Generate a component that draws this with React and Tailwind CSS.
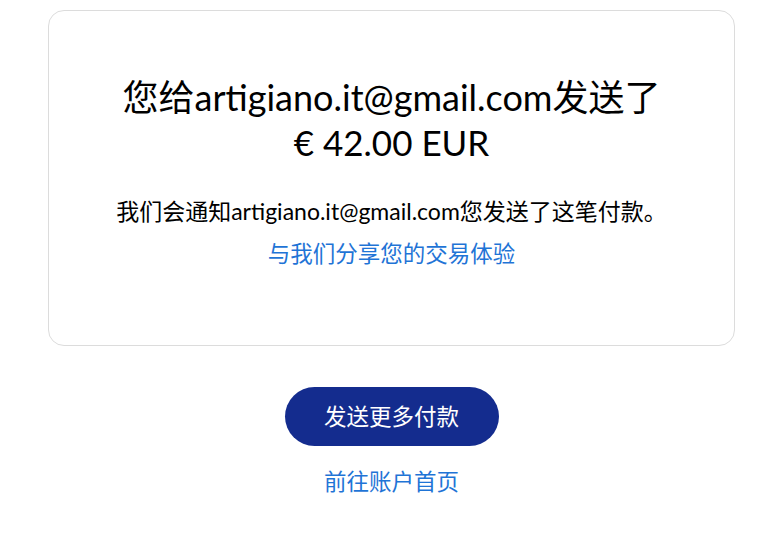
const font = { fontFamily: '"Lato", "Noto Sans CJK SC", sans-serif' };

export default function App() {
  return (
    <div className="min-h-screen bg-white pt-[10px] text-[#000]" style={font}>
      <div className="ml-[48px] w-[687px] rounded-[16px] border border-[#dcdcdc] bg-white px-4 pt-[64px] pb-[77px] text-center">
        <h1 className="text-[36px] leading-[45px] font-normal">
          您给artigiano.it@gmail.com发送了
          <br />
          <span className="text-[35px]">€ 42.00 EUR</span>
        </h1>
        <p className="mt-[32px] text-[23px] leading-[28px]">
          我们会通知artigiano.it@gmail.com您发送了这笔付款。
        </p>
        <a href="#" className="mt-[15px] inline-block text-[22.5px] leading-[28px] text-[#1f74d6]">
          与我们分享您的交易体验
        </a>
      </div>

      <div className="ml-[48px] flex w-[687px] flex-col items-center">
        <button
          type="button"
          className="mt-[41px] h-[59px] w-[214px] rounded-full bg-[#142c8e] text-[22.5px] text-white"
        >
          发送更多付款
        </button>
        <a href="#" className="mt-[22px] text-[22.5px] leading-[28px] text-[#1f74d6]">
          前往账户首页
        </a>
      </div>
    </div>
  );
}
